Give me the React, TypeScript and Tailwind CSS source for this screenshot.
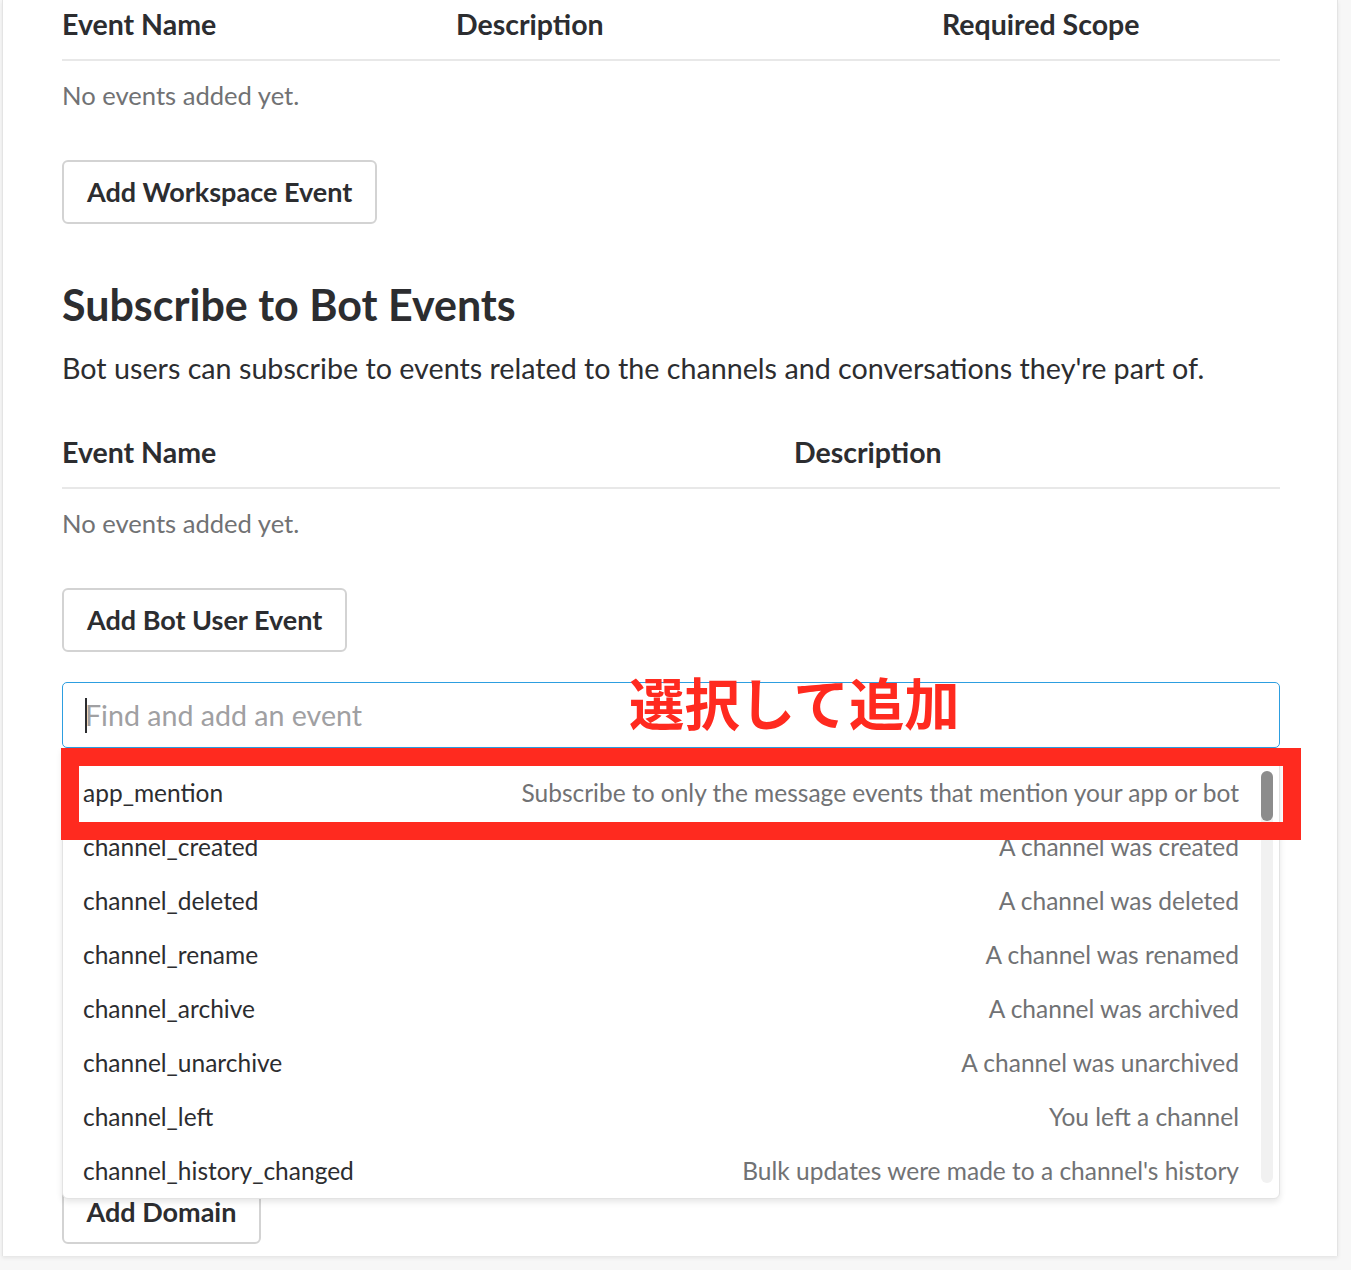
import React from "react";

const events = [
  { name: "app_mention", desc: "Subscribe to only the message events that mention your app or bot" },
  { name: "channel_created", desc: "A channel was created" },
  { name: "channel_deleted", desc: "A channel was deleted" },
  { name: "channel_rename", desc: "A channel was renamed" },
  { name: "channel_archive", desc: "A channel was archived" },
  { name: "channel_unarchive", desc: "A channel was unarchived" },
  { name: "channel_left", desc: "You left a channel" },
  { name: "channel_history_changed", desc: "Bulk updates were made to a channel's history" },
];

function OutlineButton({ label }: { label: string }) {
  return (
    <button className="h-[64px] px-[23px] pb-[2px] border-2 border-[#d3d3d3] rounded-[6px] bg-white text-[27px] font-bold text-[#2c2d30] leading-none">
      {label}
    </button>
  );
}

function EmptyRow() {
  return (
    <p className="pt-[18px] pb-[1px] text-[25.6px] leading-[32px] text-[#717274]">
      No events added yet.
    </p>
  );
}

export default function App() {
  return (
    <div className="min-h-screen bg-[#f7f7f7]" style={{ fontFamily: "Lato, 'Noto Sans', sans-serif" }}>
      <div className="ml-[2px] w-[1336px] bg-white border-l border-r border-[#e4e4e4] pl-[59px] pr-[57px] pb-[12px] shadow-[0_2px_4px_rgba(0,0,0,0.08)]">
        {/* Workspace events */}
        <div className="grid grid-cols-[394px_486px_1fr] h-[61px] pt-[7px] border-b-2 border-[#e8e8e8] text-[28.5px] leading-[34px] font-bold text-[#2c2d30]">
          <span>Event Name</span>
          <span>Description</span>
          <span>Required Scope</span>
        </div>
        <EmptyRow />
        <div className="mt-[48px]">
          <OutlineButton label="Add Workspace Event" />
        </div>

        {/* Bot events */}
        <h2 className="mt-[56px] text-[43px] leading-[50px] font-bold text-[#2c2d30]">
          Subscribe to Bot Events
        </h2>
        <p className="mt-[20px] pb-[1px] text-[28.7px] leading-[36px] text-[#2c2d30]">
          Bot users can subscribe to events related to the channels and conversations they're part of.
        </p>
        <div className="mt-[41px] grid grid-cols-[732px_1fr] h-[61px] pt-[7px] border-b-2 border-[#e8e8e8] text-[28.5px] leading-[34px] font-bold text-[#2c2d30]">
          <span>Event Name</span>
          <span>Description</span>
        </div>
        <EmptyRow />
        <div className="mt-[48px]">
          <OutlineButton label="Add Bot User Event" />
        </div>

        {/* Event picker */}
        <div className="relative mt-[30px] w-[1218px]">
          <div className="relative h-[66px] border border-[#2d9ee0] rounded-[5px] bg-white flex items-center pl-[22px]">
            <span className="absolute left-[22px] top-[15px] w-[2px] h-[35px] bg-[#2c2d30]" />
            <input
              className="w-full bg-transparent outline-none text-[28.6px] text-[#2c2d30] placeholder:text-[#a0a0a2]"
              placeholder="Find and add an event"
            />
          </div>

          <div className="absolute left-0 right-0 top-full z-10 bg-white border border-[#e3e3e3] rounded-b-[6px] shadow-[0_3px_6px_rgba(0,0,0,0.1)] pt-[17px]">
            {events.map((ev) => (
              <div key={ev.name} className="flex items-center justify-between h-[54px] pl-[20px] pr-[40px] text-[24.5px]">
                <span className="text-[#2c2d30]">{ev.name}</span>
                <span className="text-[#717274]">{ev.desc}</span>
              </div>
            ))}
            <div className="absolute right-[6px] top-[22px] w-[12px] h-[412px] rounded-full bg-[#f1f1f1]">
              <div className="h-[50px] rounded-full bg-[#8c8c8c]" />
            </div>
          </div>

          {/* annotation */}
          <span
            className="absolute left-[567px] top-[-9px] z-20 text-[55.4px] leading-[56px] font-bold text-[#ff2a1f] whitespace-nowrap"
            style={{ fontFamily: "'Noto Sans CJK JP', sans-serif" }}
          >
            選択して追加
          </span>
          <div className="absolute left-[-1px] top-[66px] z-20 w-[1240px] h-[92px] border-[18px] border-[#ff2a1f]" />
        </div>

        <div className="mt-[432px]">
          <button className="h-[64px] w-[199px] pb-[2px] border-2 border-[#d3d3d3] rounded-[6px] bg-white text-[27px] font-bold text-[#2c2d30] leading-none">
            Add Domain
          </button>
        </div>
      </div>
    </div>
  );
}
